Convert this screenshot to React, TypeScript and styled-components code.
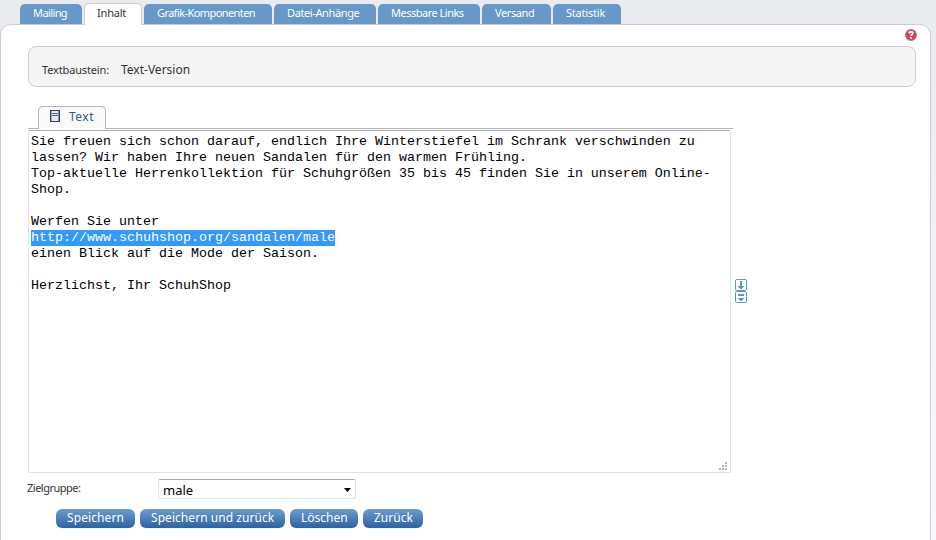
import React from "react";
import styled, { createGlobalStyle } from "styled-components";

const Global = createGlobalStyle`
  *, *::before, *::after { box-sizing: border-box; }
  body {
    margin: 0;
    height: 540px;
    overflow: hidden;
    background: linear-gradient(#e9ebef 0, #e9ebef 60px, #f5f7fa 440px, #f7f8fb 540px);
    font-family: "Noto Sans", "Open Sans", sans-serif;
    color: #333;
  }
`;

const Page = styled.div`
  width: 936px;
  height: 540px;
  overflow: hidden;
`;

const TabBar = styled.nav`
  display: flex;
  align-items: flex-end;
  gap: 2px;
  height: 25px;
  padding: 0 0 1px 20px;
`;

const Tab = styled.a<{ $width: number; $spacing: number; $active?: boolean }>`
  width: ${(p) => p.$width}px;
  height: ${(p) => (p.$active ? 22 : 20)}px;
  margin-bottom: ${(p) => (p.$active ? -1 : 0)}px;
  padding-left: ${(p) => (p.$active ? 12 : 13)}px;
  border: ${(p) => (p.$active ? "1px solid #cbcdd0" : "0")};
  border-bottom: 0;
  border-radius: 5px 5px 0 0;
  background: ${(p) => (p.$active ? "#fff" : "#6698ca")};
  color: ${(p) => (p.$active ? "#333" : "#fff")};
  font-size: 11px;
  line-height: 17px;
  letter-spacing: ${(p) => p.$spacing}px;
  white-space: nowrap;
  position: relative;
  z-index: 1;
`;

const Panel = styled.main`
  width: 931px;
  height: 530px;
  margin-top: -1px;
  padding: 4px 14px 0 27px;
  border: 1px solid #cbcdd0;
  border-radius: 11px 11px 0 0;
  background: #fff;
`;

const HelpRow = styled.div`
  display: flex;
  justify-content: flex-end;
  height: 17px;
  margin-right: -1px;
`;

const InfoBox = styled.section`
  display: flex;
  align-items: center;
  height: 41px;
  padding: 7px 0 0 13px;
  border: 1px solid #cbcdd0;
  border-radius: 8px;
  background: #f5f5f5;
`;

const Text = styled.span<{ $size?: number; $spacing?: number; $width?: number }>`
  flex: none;
  width: ${(p) => (p.$width ? `${p.$width}px` : "auto")};
  font-size: ${(p) => p.$size ?? 11}px;
  line-height: 16px;
  letter-spacing: ${(p) => p.$spacing ?? 0}px;
  white-space: nowrap;
`;

const EditorHead = styled.div`
  display: flex;
  width: 705px;
  height: 23px;
  margin-top: 19px;
  padding-left: 10px;
  border-bottom: 1px solid #b5b7ba;
`;

const EditorTab = styled.div`
  display: flex;
  width: 68px;
  height: 23px;
  padding: 2px 0 0 11px;
  gap: 9px;
  border: 1px solid #b5b7ba;
  border-bottom: 0;
  border-radius: 5px 5px 0 0;
  background: #fafafa;
  color: #2c5a92;

  svg { flex: none; }
`;

const EditorRow = styled.div`
  display: flex;
  align-items: center;
  gap: 4px;
  margin-top: 1px;
`;

const Editor = styled.div`
  position: relative;
  width: 703px;
  height: 343px;
  padding: 3px 2px;
  border: 1px solid #dfe2e8;
  border-top-color: #abadb3;
  border-radius: 2px;
  background: #fff;
  color: #000;
  font: 13.333px/16px "Liberation Mono", monospace;
  white-space: pre;
`;

const Line = styled.div`
  height: 16px;
`;

const Selection = styled.span`
  display: inline-block;
  height: 16px;
  background: #3399ff;
  color: #fff;
`;

const Grip = styled.svg`
  position: absolute;
  right: 3px;
  bottom: 2px;
`;

const Resizers = styled.div`
  display: flex;
  flex-direction: column;
  margin-top: -22px;
`;

const Field = styled.div`
  display: flex;
  height: 20px;
  margin-top: 6px;
`;

const FieldLabel = styled(Text)`
  margin-left: -1px;
  padding-top: 1px;
`;

const Select = styled.div`
  display: flex;
  align-items: center;
  justify-content: space-between;
  width: 198px;
  height: 20px;
  padding: 1px 4px 0 4px;
  border: 1px solid #dfe2e8;
  border-top-color: #abadb3;
  border-radius: 2px;
  color: #000;
`;

const Actions = styled.div`
  display: flex;
  gap: 5px;
  margin: 10px 0 0 28px;
`;

const Button = styled.div<{ $width: number; $spacing: number }>`
  width: ${(p) => p.$width}px;
  height: 19px;
  padding-left: 11px;
  border-radius: 6px;
  background: linear-gradient(#6c9dd0, #4b80b9 50%, #2c629f);
  box-shadow: 0 2px 0 -1px #f5f5f5;
  color: #fff;
  font-size: 12px;
  line-height: 17px;
  letter-spacing: ${(p) => p.$spacing}px;
  white-space: nowrap;
`;

const tabs = [
  { label: "Mailing", width: 62, spacing: -0.6 },
  { label: "Inhalt", width: 58, spacing: -0.2, active: true },
  { label: "Grafik-Komponenten", width: 128, spacing: -0.58 },
  { label: "Datei-Anhänge", width: 102, spacing: -0.38 },
  { label: "Messbare Links", width: 102, spacing: -0.5 },
  { label: "Versand", width: 69, spacing: -0.4 },
  { label: "Statistik", width: 68, spacing: -0.2 },
];

const buttons = [
  { label: "Speichern", width: 79, spacing: 0.1 },
  { label: "Speichern und zurück", width: 145, spacing: 0.05 },
  { label: "Löschen", width: 68, spacing: 0 },
  { label: "Zurück", width: 60, spacing: 0 },
];

const url = "http://www.schuhshop.org/sandalen/male";
const lines = [
  "Sie freuen sich schon darauf, endlich Ihre Winterstiefel im Schrank verschwinden zu",
  "lassen? Wir haben Ihre neuen Sandalen für den warmen Frühling.",
  "Top-aktuelle Herrenkollektion für Schuhgrößen 35 bis 45 finden Sie in unserem Online-",
  "Shop.",
  "",
  "Werfen Sie unter",
  url,
  "einen Blick auf die Mode der Saison.",
  "",
  "Herzlichst, Ihr SchuhShop",
];

const HelpIcon = () => (
  <svg width="12" height="12" viewBox="0 0 12 12">
    <circle cx="6" cy="6" r="5.4" fill="#e8384f" stroke="#85808f" strokeWidth="1.1" />
    <path d="M4 4.4Q4.2 2.9 6 2.9Q7.8 2.9 7.8 4.3C7.8 5.5 6 5.5 6 7.1M6 8V9.8" fill="none" stroke="#fff" strokeWidth="1.8" />
  </svg>
);

const PageIcon = () => (
  <svg width="10" height="13" viewBox="0 0 10 13" shapeRendering="crispEdges">
    <path d="M0 1H10V13H0Z" fill="#344257" />
    <path d="M1 2H8V12H1Z" fill="#e4eaf1" />
    <path d="M8 2H9V12H8Z" fill="#8c9cb4" />
    <path d="M1 2H2V12H1Z" fill="#9aabc0" />
    <path d="M2 4H8V5H2ZM2 6H8V7H2Z" fill="#52637b" />
  </svg>
);

const DownIcon = ({ all }: { all?: boolean }) => (
  <svg width="12" height="12" viewBox="0 0 12 12">
    <rect x=".5" y=".5" width="11" height="11" rx="1.2" fill="#fff" stroke="#5a98cc" />
    {all ? (
      <path d="M3 3H9V5H3ZM3 7H9V8H8V9H7V10H5V9H4V8H3Z" fill="#5a98cc" />
    ) : (
      <path d="M5 2H7V7H9V8H8V9H7V10H5V9H4V8H3V7H5Z" fill="#5a98cc" />
    )}
  </svg>
);

export default function App() {
  return (
    <Page>
      <Global />
      <TabBar>
        {tabs.map((t) => (
          <Tab key={t.label} $width={t.width} $spacing={t.spacing} $active={t.active}>
            <span>{t.label}</span>
          </Tab>
        ))}
      </TabBar>
      <Panel>
        <HelpRow><HelpIcon /></HelpRow>
        <InfoBox>
          <Text $width={79} $spacing={-0.15}>Textbaustein:</Text>
          <Text $size={12}>Text-Version</Text>
        </InfoBox>
        <EditorHead>
          <EditorTab>
            <PageIcon />
            <Text $size={12} $spacing={0.5}>Text</Text>
          </EditorTab>
        </EditorHead>
        <EditorRow>
          <Editor>
            {lines.map((line, i) => (
              <Line key={i}>{line === url ? <Selection>{line}</Selection> : line}</Line>
            ))}
            <Grip width="9" height="8" viewBox="0 0 9 8" shapeRendering="crispEdges">
              <path d="M7 0H9V2H7ZM4 3H6V5H4ZM7 3H9V5H7ZM1 6H3V8H1ZM4 6H6V8H4ZM7 6H9V8H7Z" fill="#b5b5b5" />
            </Grip>
          </Editor>
          <Resizers>
            <DownIcon />
            <DownIcon all />
          </Resizers>
        </EditorRow>
        <Field>
          <FieldLabel $width={131} $spacing={-0.5}>Zielgruppe:</FieldLabel>
          <Select>
            <Text $size={13}>male</Text>
            <svg width="7" height="4" viewBox="0 0 7 4"><path d="M0 0H7L3.5 4Z" fill="#000" /></svg>
          </Select>
        </Field>
        <Actions>
          {buttons.map((b) => (
            <Button key={b.label} $width={b.width} $spacing={b.spacing}>{b.label}</Button>
          ))}
        </Actions>
      </Panel>
    </Page>
  );
}
